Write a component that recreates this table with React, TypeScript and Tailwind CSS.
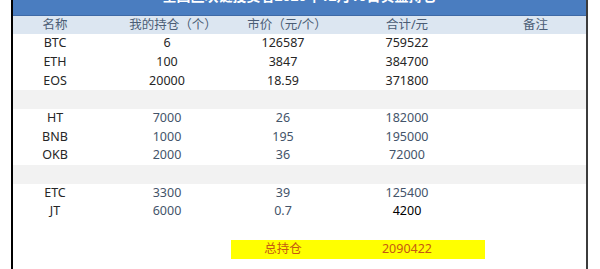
const font = { fontFamily: '"Noto Sans", "Noto Sans CJK SC", sans-serif' };

type Row = { name: string; qty: string; price: string; total: string; tone: "dark" | "slate" };

const groups: Row[][] = [
  [
    { name: "BTC", qty: "6", price: "126587", total: "759522", tone: "dark" },
    { name: "ETH", qty: "100", price: "3847", total: "384700", tone: "dark" },
    { name: "EOS", qty: "20000", price: "18.59", total: "371800", tone: "dark" },
  ],
  [
    { name: "HT", qty: "7000", price: "26", total: "182000", tone: "slate" },
    { name: "BNB", qty: "1000", price: "195", total: "195000", tone: "slate" },
    { name: "OKB", qty: "2000", price: "36", total: "72000", tone: "slate" },
  ],
  [
    { name: "ETC", qty: "3300", price: "39", total: "125400", tone: "slate" },
    { name: "JT", qty: "6000", price: "0.7", total: "4200", tone: "slate" },
  ],
];

const cols = "grid grid-cols-[84px_140px_92px_156px_1fr] h-[18.7px] items-center";
const cell = "flex justify-center whitespace-nowrap";

function cn(...c: (string | false | undefined)[]) {
  return c.filter(Boolean).join(" ");
}

function DataRow({ row }: { row: Row }) {
  const num = row.tone === "dark" ? "text-[#262626]" : "text-[#44546a]";
  return (
    <div className={cols}>
      <span className={cn(cell, "text-[#262626]")}>{row.name}</span>
      <span className={cn(cell, num)}>{row.qty}</span>
      <span className={cn(cell, num)}>{row.price}</span>
      <span className={cn(cell, row.total === "4200" ? "text-black" : num)}>{row.total}</span>
      <span />
    </div>
  );
}

export default function App() {
  return (
    <div className="w-[600px] h-[269px] bg-white overflow-hidden text-[12.5px]" style={font}>
      <div className="ml-[11px] w-[577px] h-full border-l-2 border-l-black border-r-2 border-r-[#3c3c3c] flex flex-col">
        {/* title row, scrolled mostly out of view */}
        <div className="h-[15.6px] shrink-0 overflow-hidden bg-[#4a7dc0] border-b border-b-[#3f6aa6] flex justify-center">
          <span className="-mt-[14px] text-[14px] leading-[20px] font-bold text-white whitespace-nowrap">
            全国区块链投资者2020年12月10日实盘持仓
          </span>
        </div>
        <div className={cn(cols, "bg-[#dce6f1] text-[#4b5d75] text-[12.5px] shrink-0")}>
          <span className={cell}>名称</span>
          <span className={cn(cell, "pl-[12px]")}>我的持仓（个）</span>
          <span className={cn(cell, "pl-[8px]")}>市价（元/个）</span>
          <span className={cell}>合计/元</span>
          <span className={cell}>备注</span>
        </div>
        {groups.map((g, i) => (
          <div key={i}>
            {i > 0 && <div className="h-[18.7px] bg-[#f2f2f2]" />}
            {g.map((r) => (
              <DataRow key={r.name} row={r} />
            ))}
          </div>
        ))}
        <div className="h-[18.7px]" />
        <div className="h-[18.7px] flex items-center">
          <div className="ml-[218px] w-[254px] h-full bg-[#ffff00] flex items-center text-[#c55a11]">
            <span className="w-[104px] flex justify-center">总持仓</span>
            <span className="w-[144px] flex justify-center">2090422</span>
          </div>
        </div>
      </div>
    </div>
  );
}
